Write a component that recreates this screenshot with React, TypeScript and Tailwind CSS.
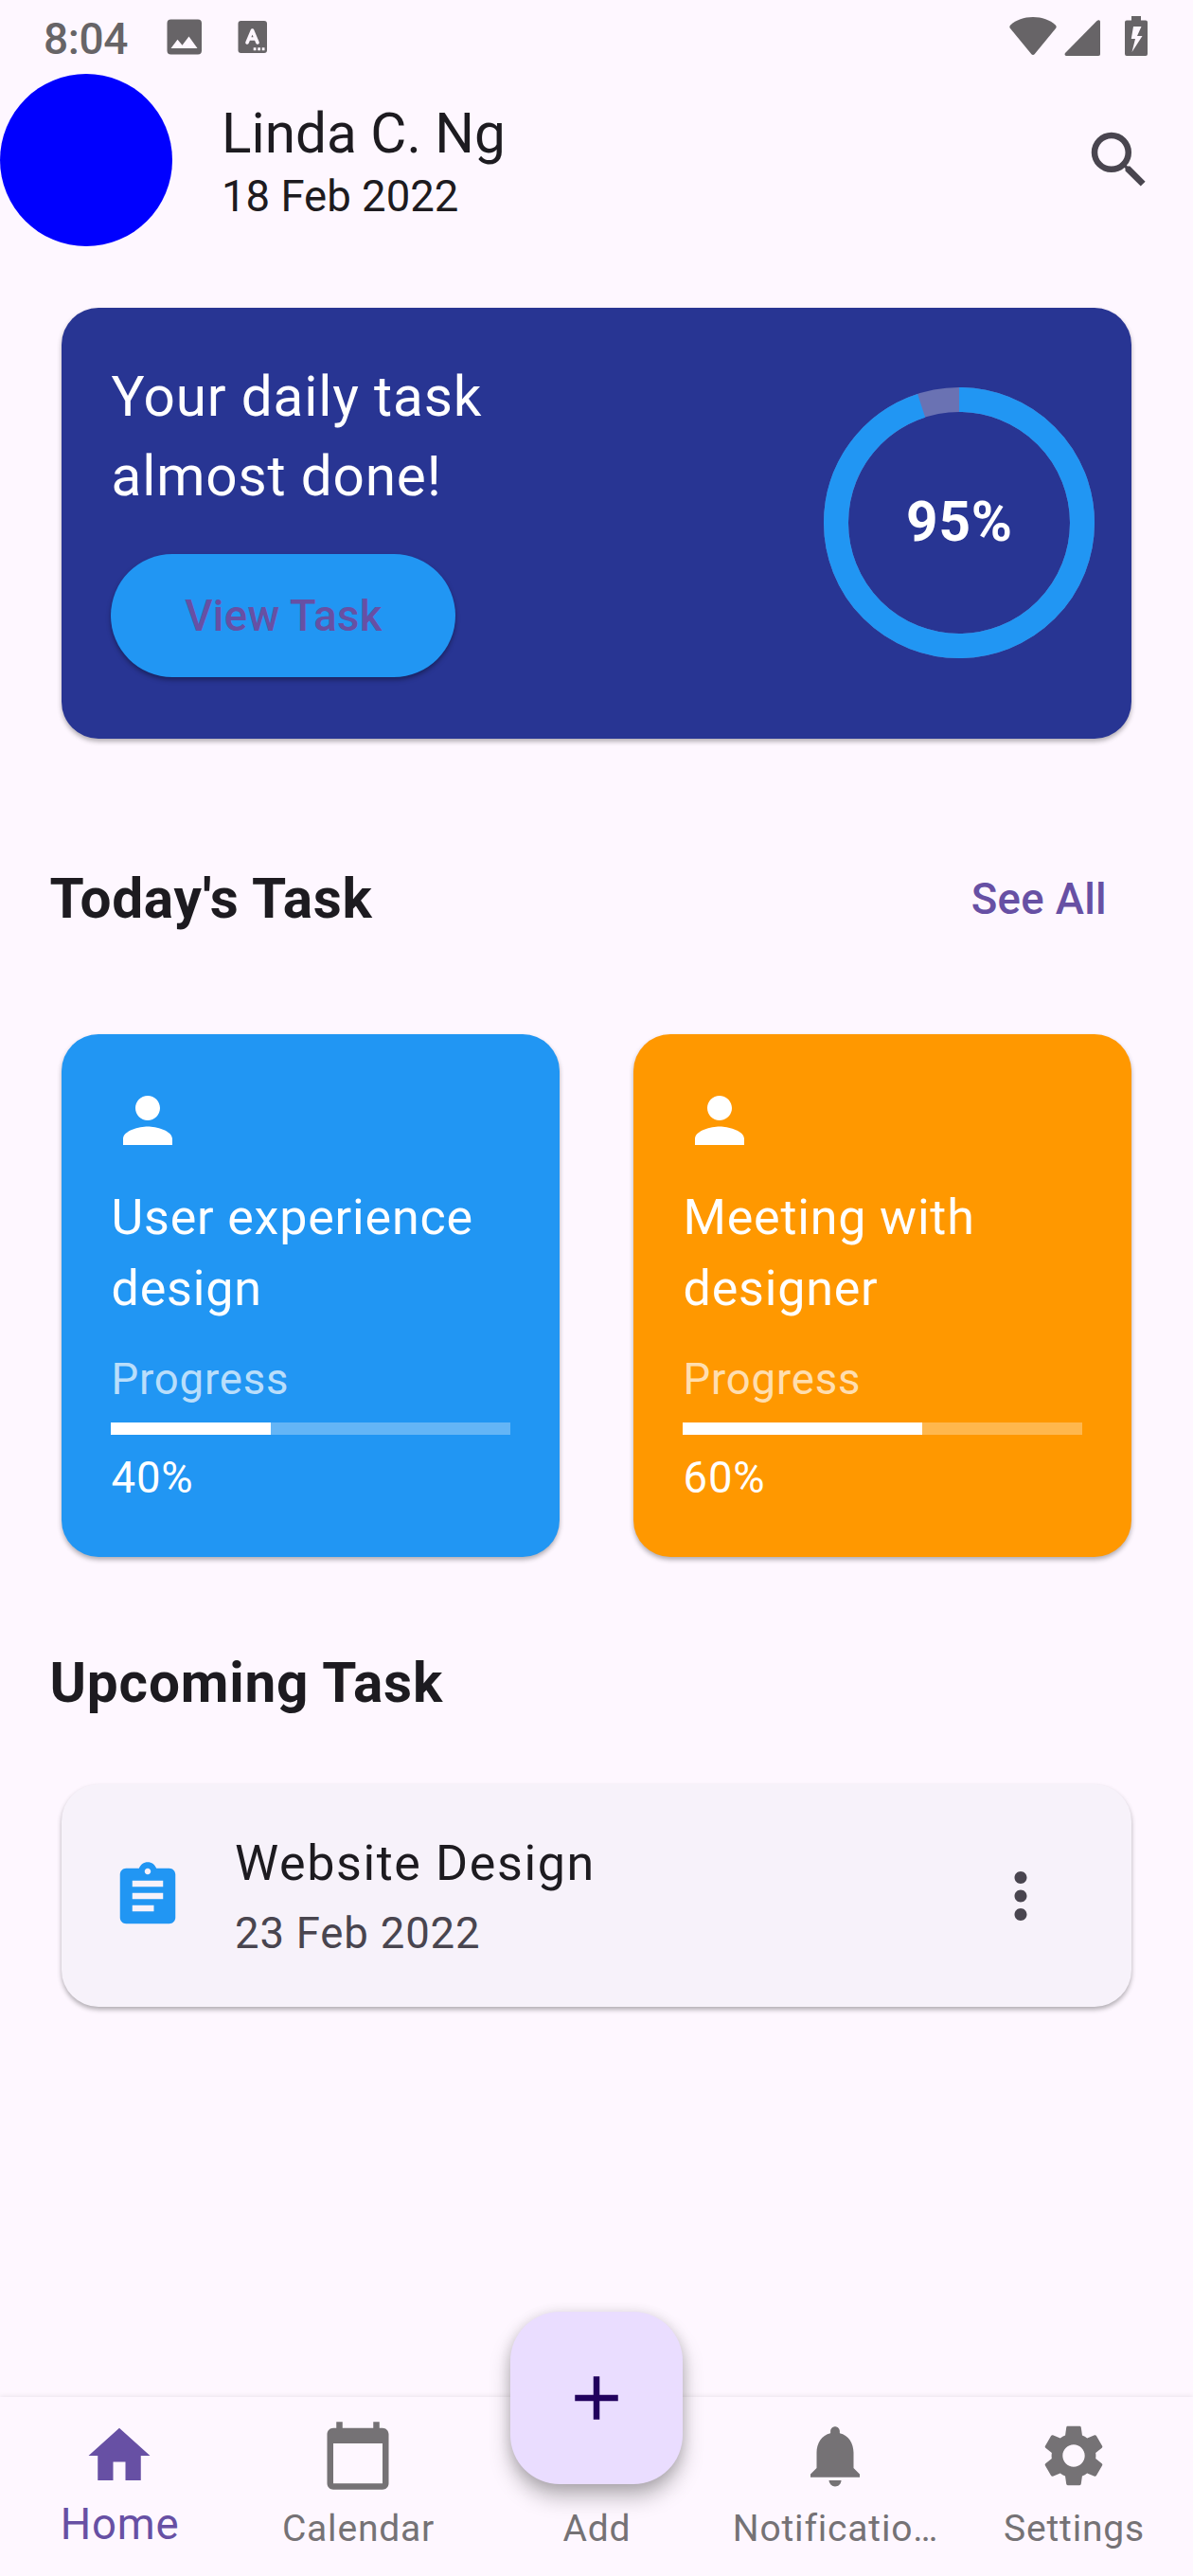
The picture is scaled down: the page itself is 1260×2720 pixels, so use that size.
import type { IconType } from "react-icons";
import {
  MdAdd,
  MdAssignment,
  MdCalendarToday,
  MdHome,
  MdMoreVert,
  MdNotifications,
  MdPerson,
  MdSearch,
  MdSettings,
} from "react-icons/md";

function StatusBar() {
  return (
    <div className="flex h-[78px] shrink-0 items-start text-[#676467]">
      <span className="ml-[46px] mt-[14px] text-[46px] leading-[54px] font-medium tracking-[-0.4px]">8:04</span>
      <svg className="ml-[41px] mt-[20px]" width="38" height="38" viewBox="0 0 38 38">
        <path
          fillRule="evenodd"
          fill="currentColor"
          d="M4.5 .5h28.500a4 4 0 0 1 4 4v29a4 4 0 0 1-4 4H4.500a4 4 0 0 1-4-4v-29a4 4 0 0 1 4-4zM4.500 31h28L23.500 18.500l-7 9.300-5-6z"
        />
      </svg>
      <svg className="ml-[37px] mt-[22px]" width="32" height="34" viewBox="0 0 32 34">
        <rect x="0.500" y="0" width="30.500" height="34" rx="3" fill="currentColor" />
        <path d="M10 23 L15.500 10 L21 23 M12 19h7" fill="none" stroke="#fef7ff" strokeWidth="3.600" strokeLinecap="round" strokeLinejoin="round" />
        <path d="M16.700 28.200h2.800v3h-2.800zM21.200 28.200H24v3h-2.800zM25.700 28.200h2.800v3h-2.800z" fill="#fef7ff" />
      </svg>
      <div className="ml-auto mr-[48px] flex items-start">
        <svg className="mt-[17px]" width="50" height="42" viewBox="0 0 50 42">
          <path
            fill="currentColor"
            d="M1.200 9.500C7 4 15.500 1 25 1s18 3 23.800 8.500c1 1 1.100 2.200.4 3.200L26.800 40c-1 1.200-2.600 1.200-3.600 0L.8 12.700c-.7-1-.6-2.200.4-3.200z"
          />
        </svg>
        <svg className="ml-[8px] mt-[20px]" width="39" height="40" viewBox="0 0 39 40">
          <path fill="currentColor" d="M34.500 2 1 36c-1 1.500-.5 3 1.500 3H36c1.500 0 2-.8 2-2V3c0-2-2-2.500-3.500-1z" />
        </svg>
        <svg className="ml-[25px] mt-[17px]" width="24" height="42" viewBox="0 0 24 42">
          <path
            fillRule="evenodd"
            fill="currentColor"
            d="M7 0h10v4.500h5a2 2 0 0 1 2 2V40a2 2 0 0 1-2 2H2a2 2 0 0 1-2-2V6.500a2 2 0 0 1 2-2h5zM9 11 6.800 24H11L7.500 38 18.500 21H13l4.500-10z"
          />
        </svg>
      </div>
    </div>
  );
}

function Header() {
  return (
    <header className="flex h-[182px] shrink-0 items-center">
      <div className="size-[182px] rounded-full bg-[#0000ff]" />
      <div className="ml-[52px] pt-[6px]">
        <div className="text-[58.5px] leading-[69px]">Linda C. Ng</div>
        <div className="pt-px text-[45.5px] leading-[61px]">18 Feb 2022</div>
      </div>
      <button className="mr-[39px] ml-auto text-[#49454f]" aria-label="Search">
        <MdSearch size={78} />
      </button>
    </header>
  );
}

function Ring({ value }: { value: number }) {
  const c = 2 * Math.PI * 130;
  return (
    <div className="relative size-[286px]">
      <svg width="286" height="286" viewBox="0 0 286 286" className="-rotate-90">
        <circle cx="143" cy="143" r="130" fill="none" stroke="#6a72b3" strokeWidth="26" />
        <circle
          cx="143"
          cy="143"
          r="130"
          fill="none"
          stroke="#2196f3"
          strokeWidth="26"
          strokeDasharray={`${(c * value) / 100} ${c}`}
        />
      </svg>
      <div className="absolute inset-0 flex items-center justify-center pl-px text-[58.5px] font-bold tracking-[0.8px]">
        {value}%
      </div>
    </div>
  );
}

function HeroCard() {
  return (
    <section className="mx-[65px] mt-[65px] flex h-[455px] shrink-0 rounded-[39px] bg-[#283593] pr-[39px] pl-[52px] text-white shadow-[0_3px_5px_rgba(0,0,0,0.3)]">
      <div className="pt-[52px]">
        <p className="pl-[0.5px] text-[58.5px] leading-[84px] tracking-[0.8125px]">
          Your daily task
          <br />
          almost done!
        </p>
        <button className="mt-[40px] flex h-[130px] w-[364px] items-center justify-center rounded-full bg-[#2196f3] pt-[2px] pl-px text-[45.5px] font-medium tracking-[0.325px] text-[#6750a4] shadow-[0_3px_5px_rgba(0,0,0,0.35)]">
          View Task
        </button>
      </div>
      <div className="ml-auto pt-[84px]">
        <Ring value={95} />
      </div>
    </section>
  );
}

function TaskCard({ title, value, className }: { title: [string, string]; value: number; className: string }) {
  return (
    <div
      className={`h-[552.5px] w-[526px] rounded-[39px] p-[52px] text-white shadow-[0_3px_5px_rgba(0,0,0,0.3)] ${className}`}
    >
      <MdPerson size={78} />
      <div className="mt-[26px] pl-[0.5px] text-[52px] leading-[75px] tracking-[0.8125px]">
        {title[0]}
        <br />
        {title[1]}
      </div>
      <div className="mt-[26px] pl-[0.5px] text-[45.5px] leading-[65px] tracking-[0.8125px] text-white/70">Progress</div>
      <div className="mt-[13px] h-[13px] bg-white/30">
        <div className="h-full bg-white" style={{ width: `${value}%` }} />
      </div>
      <div className="mt-[13px] pl-[0.5px] text-[45.5px] leading-[65px] tracking-[0.8125px]">{value}%</div>
    </div>
  );
}

function NavItem({ icon: Icon, label, active }: { icon?: IconType; label: string; active?: boolean }) {
  return (
    <div className={`flex flex-1 flex-col items-center pt-[23px] ${active ? "text-[#6750a4]" : "text-[#757275]"}`}>
      <div className="size-[78px]">{Icon && <Icon size={78} />}</div>
      <div
        className={
          active
            ? "mt-[7px] pl-px text-[45.5px] leading-[54px] tracking-[0.8125px]"
            : "mt-[15px] pl-px text-[39px] leading-[46px] tracking-[0.8125px]"
        }
      >
        {label}
      </div>
    </div>
  );
}

export default function App() {
  return (
    <div className="flex h-[2720px] w-[1260px] flex-col overflow-hidden bg-[#fef7ff] font-['Roboto',sans-serif] whitespace-nowrap text-[#1d1b20]">
      <StatusBar />
      <Header />
      <main className="flex flex-1 flex-col">
        <HeroCard />
        <div className="mt-[127px] flex h-[84px] shrink-0 items-center justify-between pr-[91px] pl-[52.5px] leading-[84px]">
          <h2 className="text-[58.5px] font-bold tracking-[0.7px]">Today's Task</h2>
          <button className="pt-[2px] text-[45.5px] font-medium tracking-[0.325px] text-[#6750a4]">See All</button>
        </div>
        <div className="mt-[100.7px] flex shrink-0 justify-between px-[65px]">
          <TaskCard title={["User experience", "design"]} value={40} className="bg-[#2196f3]" />
          <TaskCard title={["Meeting with", "designer"]} value={60} className="bg-[#ff9800]" />
        </div>
        <h2 className="mt-[90.8px] ml-[52.5px] text-[58.5px] leading-[84px] font-bold tracking-[0.8125px]">
          Upcoming Task
        </h2>
        <div className="mx-[65px] mt-[65px] flex h-[235px] shrink-0 items-start rounded-[39px] bg-[#f7f2fa] pr-[78px] pl-[52px] shadow-[0_3px_5px_rgba(0,0,0,0.3)]">
          <MdAssignment size={78} className="mt-[79px] text-[#2196f3]" />
          <div className="ml-[53px] pt-[45px]">
            <div className="text-[52px] leading-[78px] tracking-[1.625px]">Website Design</div>
            <div className="mt-[2px] text-[45.5px] leading-[65px] tracking-[0.8125px] text-[#49454f]">23 Feb 2022</div>
          </div>
          <button className="mt-[79px] ml-auto text-[#49454f]" aria-label="More">
            <MdMoreVert size={78} />
          </button>
        </div>
      </main>
      <nav className="relative flex h-[189px] shrink-0 bg-[#fef7ff] shadow-[0_-1px_5px_rgba(0,0,0,0.08)]">
        <NavItem icon={MdHome} label="Home" active />
        <NavItem icon={MdCalendarToday} label="Calendar" />
        <NavItem label="Add" />
        <NavItem icon={MdNotifications} label="Notificatio…" />
        <NavItem icon={MdSettings} label="Settings" />
        <button
          className="absolute top-[-90.5px] left-1/2 flex size-[182px] -translate-x-1/2 items-center justify-center rounded-[52px] bg-[#eaddff] text-[#21005d] shadow-[0_14px_22px_rgba(0,0,0,0.26),0_2px_14px_rgba(0,0,0,0.14)]"
          aria-label="Add task"
        >
          <MdAdd size={78} />
        </button>
      </nav>
    </div>
  );
}
